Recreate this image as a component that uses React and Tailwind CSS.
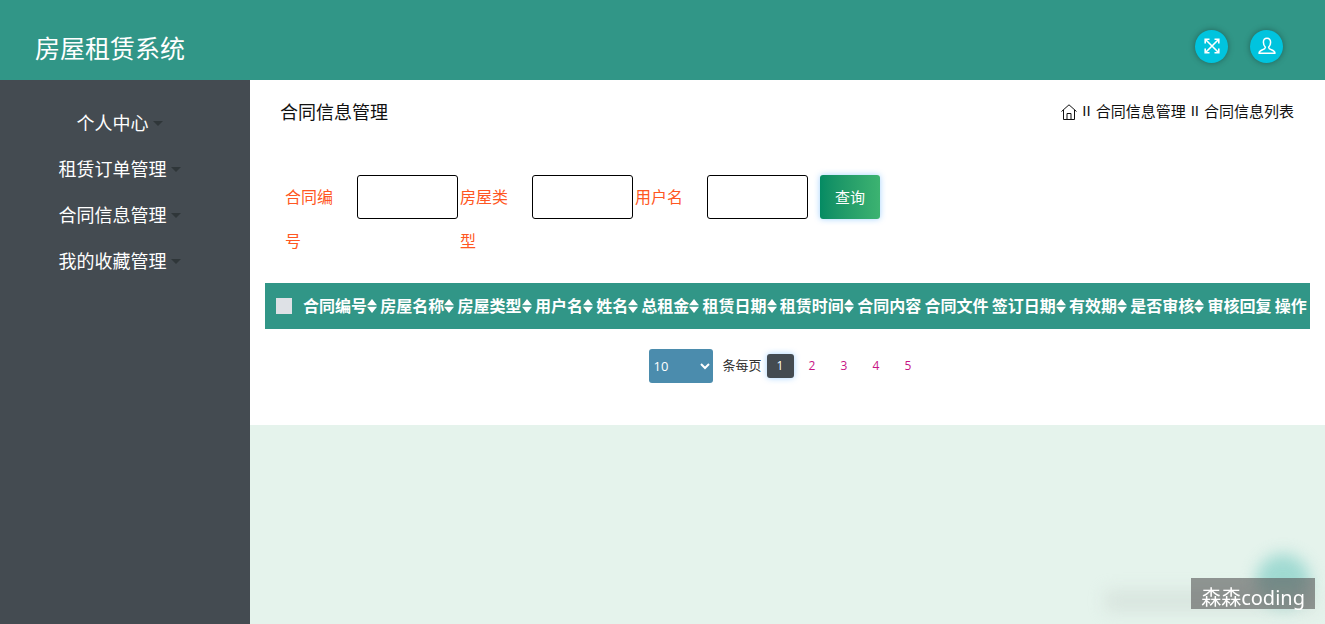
const menu = ['个人中心', '租赁订单管理', '合同信息管理', '我的收藏管理'];

const fields = [
  { id: 'contract', label: '合同编号' },
  { id: 'houseType', label: '房屋类型' },
  { id: 'username', label: '用户名' },
];

const columns = [
  ['合同编号', true],
  ['房屋名称', true],
  ['房屋类型', true],
  ['用户名', true],
  ['姓名', true],
  ['总租金', true],
  ['租赁日期', true],
  ['租赁时间', true],
  ['合同内容', false],
  ['合同文件', false],
  ['签订日期', true],
  ['有效期', true],
  ['是否审核', true],
  ['审核回复', false],
  ['操作', false],
];

function ExpandIcon() {
  return (
    <svg width="16" height="16" viewBox="0 0 16 16" fill="none" stroke="currentColor" strokeWidth="1.6" aria-hidden="true">
      <path d="M1.500 1.500 14.500 14.500M14.500 1.500 1.500 14.500" />
      <path d="M1.200 5.500V1.200h4.300M10.500 1.200h4.300v4.300M14.800 10.500v4.300h-4.300M5.500 14.800H1.200v-4.300" />
    </svg>
  );
}

function UserIcon() {
  return (
    <svg width="18" height="18" viewBox="0 0 18 18" fill="none" stroke="currentColor" strokeWidth="1.500" strokeLinejoin="round" aria-hidden="true">
      <path d="M9 1.300C6.500 1.300 5.400 3 5.400 5.300c0 2.300.9 3.900 2 5-.1 1.500-1 2-2.800 2.500C2.300 13.500 1.200 14 1 16.300h16c-.2-2.300-1.300-2.800-3.600-3.500-1.800-.5-2.700-1-2.800-2.500 1.100-1.100 2-2.700 2-5C12.600 3 11.500 1.300 9 1.300Z" />
    </svg>
  );
}

function HomeIcon() {
  return (
    <svg width="16" height="16" viewBox="0 0 16 16" fill="none" stroke="currentColor" strokeWidth="1" aria-hidden="true">
      <path d="M.5 7.500 8 .8l7.500 6.700" />
      <path d="M2.500 6v9.500h11V6" />
      <path d="M6 15.500V9.500h4v6" />
    </svg>
  );
}

function SortIcon() {
  return (
    <svg width="10" height="14" viewBox="0 0 10 14" fill="currentColor" aria-hidden="true">
      <path d="M5 0 10 6.300H0Z" />
      <path d="M5 14 0 7.700h10Z" />
    </svg>
  );
}

export default function App() {
  return (
    <div className="flex min-h-screen flex-col bg-[#e5f3ec] font-['Noto_Sans','Noto_Sans_CJK_SC',sans-serif] text-[#111]">
      <header className="flex h-20 items-center justify-between bg-[#319687] pr-[42px] pl-[35px]">
        <h1 className="pt-4 text-[25px] leading-8 text-white">房屋租赁系统</h1>
        <div className="flex gap-[22px] pt-3 text-white">
          <button type="button" aria-label="全屏" className="flex size-[33px] items-center justify-center rounded-full bg-[#00c4de] shadow-[0_0_6px_rgba(0,0,0,0.35)]">
            <ExpandIcon />
          </button>
          <button type="button" aria-label="用户" className="flex size-[33px] items-center justify-center rounded-full bg-[#00c4de] shadow-[0_0_6px_rgba(0,0,0,0.35)]">
            <UserIcon />
          </button>
        </div>
      </header>

      <div className="flex grow">
        <nav className="w-[250px] shrink-0 bg-[#444b51] pt-5">
          <ul>
            {menu.map((item) => (
              <li key={item}>
                <a href="#" className="flex h-[46px] items-center justify-center gap-1 pr-[11px] text-[18px] text-white">
                  {item}
                  <svg width="10" height="5" viewBox="0 0 10 5" fill="#2f3639" aria-hidden="true">
                    <path d="M0 0h10L5 5Z" />
                  </svg>
                </a>
              </li>
            ))}
          </ul>
        </nav>

        <main className="min-w-0 grow">
          <div className="bg-white px-[15px] pb-[42px]">
            <div className="flex h-[65px] items-center justify-between pr-4 pl-[15px]">
              <h2 className="text-[18px]">合同信息管理</h2>
              <div className="flex items-center gap-[5px] pb-[2px] text-[15px]">
                <HomeIcon />
                <span className="font-['Liberation_Sans',sans-serif]">II</span>
                <span>合同信息管理</span>
                <span className="font-['Liberation_Sans',sans-serif]">II</span>
                <span>合同信息列表</span>
              </div>
            </div>

            <form className="flex items-start px-5 pt-[30px] pb-5" onSubmit={(e) => e.preventDefault()}>
              {fields.map((f) => (
                <div key={f.id} className="mr-[2px] flex items-start">
                  <label htmlFor={f.id} className="w-[72px] pr-3 text-[16px] leading-[44px] text-[#ff5722]">
                    {f.label}
                  </label>
                  <input id={f.id} type="text" className="h-11 w-[101px] rounded-[3px] border border-black px-2" />
                </div>
              ))}
              <button type="submit" className="ml-[10px] h-11 w-[60px] rounded-[3px] bg-linear-to-r from-[#048b63] to-[#3cb371] text-[15px] text-white shadow-[0_0_6px_rgba(30,144,255,0.4)]">
                查询
              </button>
            </form>

            <table className="w-full border-collapse bg-[#319687] text-[16px] text-white">
              <thead>
                <tr className="h-[46px]">
                  <th className="w-9 pl-[11px] text-left">
                    <input type="checkbox" aria-label="全选" className="block size-4 appearance-none bg-[#dee1e6]" />
                  </th>
                  {columns.map(([name, sortable]) => (
                    <th key={name} className="pr-px pl-[2px] text-left font-bold whitespace-nowrap last:pr-[3px]">
                      <span className="flex items-center">
                        {name}
                        {sortable && <SortIcon />}
                      </span>
                    </th>
                  ))}
                </tr>
              </thead>
            </table>

            <div className="flex items-center justify-center pt-5 pr-1 text-[13px]">
              <select aria-label="每页条数" defaultValue="10" className="h-[34px] w-16 rounded-[3px] bg-[#4b8cad] font-['Open_Sans',sans-serif] text-[13px] text-white">
                <option>10</option>
                <option>20</option>
                <option>50</option>
              </select>
              <span className="mr-[5px] ml-[9px] text-[#333]">条每页</span>
              <div className="flex gap-[5px] font-['Open_Sans',sans-serif] text-[12px]">
                <button type="button" className="h-6 w-[27px] rounded-[3px] bg-[#444b51] text-white shadow-[0_0_6px_rgba(30,144,255,0.4)]">
                  1
                </button>
                {[2, 3, 4, 5].map((n) => (
                  <button key={n} type="button" className="h-6 w-[27px] text-[#c71585]">
                    {n}
                  </button>
                ))}
              </div>
            </div>
          </div>
        </main>
      </div>

      <div className="fixed right-[10px] bottom-[15px]">
        <div className="absolute -top-6 right-[5px] size-[54px] rounded-full bg-[#8ed3cb] opacity-80 blur-[8px]" />
        <div className="absolute top-3 -left-[86px] h-[22px] w-[210px] bg-[#cdd8d2] opacity-50 blur-[8px]" />
        <div className="relative h-[31px] bg-[#555]/60 px-[10px] pt-1 text-[20px] leading-[31px] text-white">森森coding</div>
      </div>
    </div>
  );
}
